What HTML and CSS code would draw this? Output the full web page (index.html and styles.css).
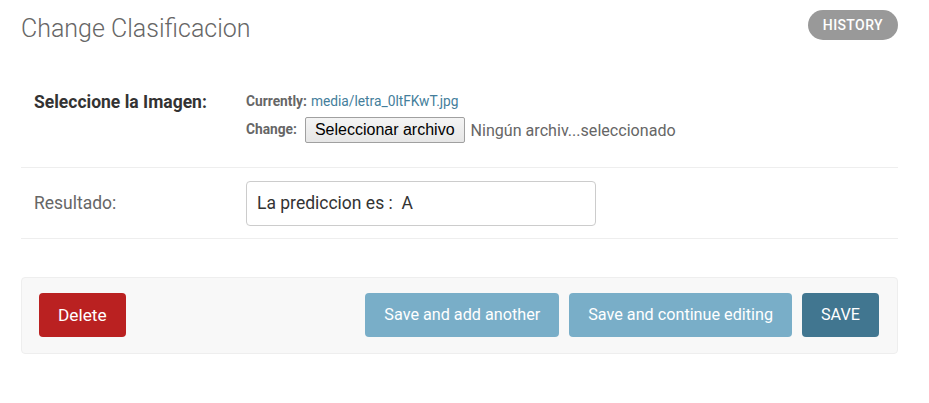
FILE: index.html
```html
<!DOCTYPE html>
<html lang="es">
<head>
<meta charset="utf-8">
<title>Change Clasificacion</title>
<link rel="stylesheet" href="styles.css">
</head>
<body>
<div class="content">
  <div class="head">
    <h1 class="title">Change Clasificacion</h1>
    <a class="history" href="#">History</a>
  </div>
  <form class="form">
    <div class="row row-file">
      <label class="label required">Seleccione la Imagen:</label>
      <div class="file-field">
        <p class="file-line"><span class="file-key">Currently:</span> <a class="file-link" href="#">media/letra_0ltFKwT.jpg</a></p>
        <p class="file-line"><span class="file-key change-key">Change:</span> <span class="file-btn">Seleccionar archivo</span><span class="file-none">Ningún archiv...seleccionado</span></p>
      </div>
    </div>
    <div class="row row-text">
      <label class="label">Resultado:</label>
      <div class="text-input">La prediccion es :&nbsp; A</div>
    </div>
    <div class="submit-row">
      <a class="btn btn-delete" href="#">Delete</a>
      <div class="spacer"></div>
      <span class="btn btn-light">Save and add another</span>
      <span class="btn btn-light">Save and continue editing</span>
      <span class="btn btn-save">SAVE</span>
    </div>
  </form>
</div>
</body>
</html>
```
FILE: styles.css
```css
* { box-sizing: border-box; }
body {
  margin: 0;
  font-family: Roboto, "Liberation Sans", Arial, sans-serif;
  color: #333;
  background: #fff;
}
.content {
  padding: 10px 31px 0 21px;
}
.head {
  display: flex;
  justify-content: space-between;
  align-items: flex-start;
}
.title {
  margin: 4px 0 0;
  font-size: 25px;
  font-weight: 300;
  color: #666;
  line-height: 30px;
}
.history {
  display: block;
  height: 30px;
  line-height: 30px;
  padding: 0 15px;
  border-radius: 15px;
  background: #999;
  color: #fff;
  font-size: 14px;
  font-weight: 500;
  text-transform: uppercase;
  letter-spacing: 0.4px;
  text-decoration: none;
}
.form {
  margin-top: 27px;
}
.row {
  display: flex;
  border-bottom: 1px solid #eee;
  padding-left: 13px;
}
.row-file {
  height: 97px;
  padding-top: 19px;
}
.row-text {
  height: 71px;
  align-items: center;
}
.label {
  width: 212px;
  font-size: 17.5px;
  color: #666;
}
.required {
  font-weight: 700;
  color: #333;
  padding-top: 2px;
}
.file-field {
  font-size: 13.75px;
  padding-top: 3px;
}
.file-line {
  margin: 0;
  display: flex;
  align-items: center;
}
.file-line + .file-line {
  margin-top: 8px;
}
.file-key {
  font-weight: 700;
  color: #666;
  margin-right: 4px;
}
.change-key {
  position: relative;
  top: -1px;
}
.file-link {
  color: #447e9b;
  text-decoration: none;
}
.file-btn {
  display: inline-block;
  margin-left: 4px;
  height: 26px;
  line-height: 24px;
  padding: 0 9px;
  font-family: "Liberation Sans", Arial, sans-serif;
  font-size: 16px;
  color: #000;
  background: linear-gradient(#f4f4f4, #e6e6e6);
  border: 1px solid #a0a0a0;
  border-radius: 2px;
}
.file-none {
  margin-left: 6px;
  font-size: 16.1px;
  color: #666;
}
.text-input {
  width: 350px;
  height: 45px;
  border: 1px solid #ccc;
  border-radius: 4px;
  padding: 0 10px;
  line-height: 43px;
  font-size: 17.5px;
  color: #333;
}
.submit-row {
  display: flex;
  align-items: flex-start;
  gap: 10px;
  margin-top: 38px;
  height: 77px;
  padding: 15px 18px 0 17px;
  background: #f8f8f8;
  border: 1px solid #eee;
  border-radius: 4px;
}
.spacer { flex: 1; }
.btn {
  display: block;
  height: 44px;
  line-height: 44px;
  padding: 0 19px;
  border-radius: 4px;
  color: #fff;
  font-size: 16.2px;
  text-decoration: none;
}
.btn-delete {
  background: #ba2121;
  font-size: 17.3px;
}
.btn-light { background: #79aec8; }
.btn-save { background: #417690; }
```
